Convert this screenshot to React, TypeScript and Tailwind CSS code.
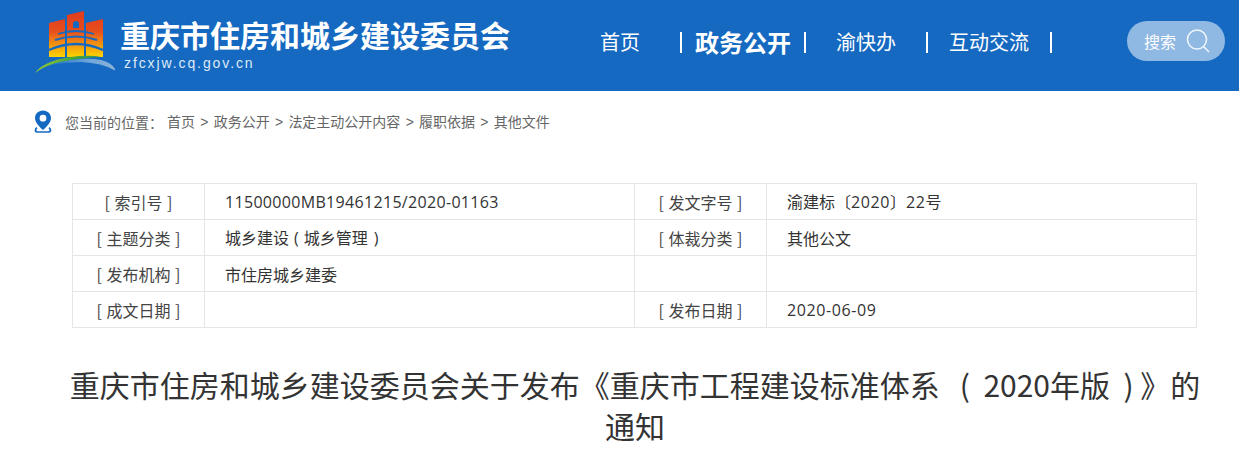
import React from "react";

const font = "font-['Noto_Sans_CJK_SC',sans-serif]";

const Num: React.FC<{ children: React.ReactNode; className?: string }> = ({ children, className = "tracking-[0.6px]" }) => (
  <span className={`font-['Open_Sans',sans-serif] ${className}`}>{children}</span>
);

const rows: [string, React.ReactNode, string, React.ReactNode][] = [
  [
    "[ 索引号 ]",
    <Num className="tracking-[0.32px]">11500000MB19461215/2020-01163</Num>,
    "[ 发文字号 ]",
    <>
      渝建标〔<Num>2020</Num>〕<Num>22</Num>号
    </>,
  ],
  [
    "[ 主题分类 ]",
    <>
      城乡建设<Num className="mx-[5px]">(</Num>城乡管理<Num className="mx-[6px]">)</Num>
    </>,
    "[ 体裁分类 ]",
    "其他公文",
  ],
  ["[ 发布机构 ]", "市住房城乡建委", "", ""],
  ["[ 成文日期 ]", "", "[ 发布日期 ]", <Num>2020-06-09</Num>],
];

const crumbs = ["首页", "政务公开", "法定主动公开内容", "履职依据", "其他文件"];

const Logo = () => (
  <svg width="84" height="68" viewBox="0 0 84 68" className="shrink-0">
    <defs>
      <linearGradient id="tower" gradientUnits="userSpaceOnUse" x1="0" y1="5" x2="0" y2="51">
        <stop offset="0" stopColor="#e03a1e" />
        <stop offset="0.45" stopColor="#e6501c" />
        <stop offset="0.75" stopColor="#f59a10" />
        <stop offset="1" stopColor="#fdd400" />
      </linearGradient>
      <linearGradient id="hill" x1="0" y1="0" x2="1" y2="0">
        <stop offset="0" stopColor="#97c83c" />
        <stop offset="0.6" stopColor="#46a53a" />
        <stop offset="1" stopColor="#2f8f6a" />
      </linearGradient>
      <linearGradient id="wave" x1="0" y1="0" x2="1" y2="0">
        <stop offset="0" stopColor="#1f76c8" />
        <stop offset="0.6" stopColor="#6ea6dc" />
        <stop offset="1" stopColor="#8fb2d6" />
      </linearGradient>
    </defs>
    <path d="M18 17 L34 13 V51 H18 Z" fill="url(#tower)" />
    <path d="M36 9 L53 5 V51 H36 Z" fill="url(#tower)" />
    <path d="M55 17 L72 13 V51 H55 Z" fill="url(#tower)" />
    <path d="M42 18 a3 3 0 0 1 6 0 v4 h-6 Z" fill="#1569c1" />
    <g fill="none" stroke="#1569c1">
      <path d="M27 28 Q45 22 63 28" strokeWidth="1.8" />
      <path d="M24 34 Q45 27 66 34" strokeWidth="2" />
      <path d="M18 44 Q45 32 72 44" strokeWidth="2.4" />
    </g>
    <path d="M4 67 Q14 53 48 50 Q62 49 70 51 Q38 53 22 58 Q12 61 4 67 Z" fill="url(#hill)" />
    <path d="M19 59 Q48 50 70 54 Q82 57 85 65 Q72 57 50 56 Q34 56 19 59 Z" fill="url(#wave)" />
  </svg>
);

const App: React.FC = () => {
  return (
    <div className={`${font} bg-white w-[1239px] h-[451px] overflow-hidden`}>
      <header className="h-[91px] bg-[#1569c1] flex text-white">
        <div className="w-[570px] pl-[31px] pt-[6px] flex items-start">
          <Logo />
          <div className="ml-[5px] pt-[10px]">
            <div className="text-[30px] leading-[36px] font-bold whitespace-nowrap">
              重庆市住房和城乡建设委员会
            </div>
            <div className="ml-[4px] mt-[1px] text-[14px] leading-[20px] tracking-[1.9px] font-['Liberation_Sans',sans-serif] text-[#dfeaf6]">
              zfcxjw.cq.gov.cn
            </div>
          </div>
        </div>
        <nav className="flex items-center h-[84px] text-[20px] whitespace-nowrap">
          <a className="w-[80px] ml-[30px] leading-[22px]">首页</a>
          <span className="w-[2px] h-[21px] bg-white" />
          <a className="ml-[13px] text-[24px] font-bold leading-[22px]">政务公开</a>
          <span className="ml-[13px] w-[2px] h-[21px] bg-white" />
          <a className="ml-[30px] leading-[22px]">渝快办</a>
          <span className="ml-[30px] w-[2px] h-[21px] bg-white" />
          <a className="ml-[21px] leading-[22px]">互动交流</a>
          <span className="ml-[21px] w-[2px] h-[21px] bg-white" />
        </nav>
        <div className="ml-[75px] mt-[21px] w-[98px] h-[40px] rounded-[20px] bg-[#8fb8e3] flex items-center pl-[17px]">
          <span className="text-[16px]">搜索</span>
          <svg width="26" height="26" viewBox="0 0 26 26" className="ml-[9px]" fill="none" stroke="#eef5fb" strokeWidth="1.6">
            <circle cx="12" cy="11.5" r="9.5" />
            <path d="M18.5 18.5 L24 24" />
          </svg>
        </div>
      </header>

      <div className="h-[62px] pl-[33px] flex items-center text-[14px] text-[#666] whitespace-nowrap">
        <svg width="20" height="24" viewBox="0 0 20 24" className="shrink-0">
          <path
            fillRule="evenodd"
            fill="#1569c1"
            d="M10 0.5 C5 0.5 2 4.2 2 8.2 C2 12.5 7 17.5 10 20 C13 17.5 18 12.5 18 8.2 C18 4.2 15 0.5 10 0.5 Z M10 4.8 a3.4 3.4 0 1 1 0 6.8 a3.4 3.4 0 1 1 0 -6.8 Z"
          />
          <path d="M3.5 17 C1 18.5 1 22.8 4 22.8 H16 C19 22.8 19 18.5 16.5 17 L15.5 18.3 C17 19.4 16.8 21.2 15.5 21.2 H4.5 C3.2 21.2 3 19.4 4.5 18.3 Z" fill="#1569c1" />
        </svg>
        <span className="ml-[12px]">您当前的位置：</span>
        <span className="ml-[4px] flex">
          {crumbs.map((c, i) => (
            <span key={c}>
              {i > 0 && <span className="mx-[5.25px] font-['Liberation_Sans',sans-serif]">&gt;</span>}
              {c}
            </span>
          ))}
        </span>
      </div>

      <div className="pt-[30px] pl-[72px]">
        <table className="w-[1125px] table-fixed border-collapse border border-[#e5e5e5] text-[16px] text-[#333]">
          <colgroup>
            <col className="w-[132px]" />
            <col className="w-[430px]" />
            <col className="w-[132px]" />
            <col />
          </colgroup>
          <tbody>
            {rows.map((r) => (
              <tr key={r[0]} className="h-[36px]">
                <td className="border border-[#e5e5e5] text-center leading-[20px] text-[#444] [word-spacing:1px]">{r[0]}</td>
                <td className="border border-[#e5e5e5] pl-[20px] leading-[20px]">{r[1]}</td>
                <td className="border border-[#e5e5e5] text-center leading-[20px] text-[#444] [word-spacing:1px]">{r[2]}</td>
                <td className="border border-[#e5e5e5] pl-[20px] leading-[20px]">{r[3]}</td>
              </tr>
            ))}
          </tbody>
        </table>
      </div>

      <h1 className="mt-[36px] ml-[65px] w-[1140px] text-center text-[30px] leading-[41px] text-[#333]">
        重庆市住房和城乡建设委员会关于发布《重庆市工程建设标准体系{"\u00a0\u00a0\u00a0(\u00a0\u00a02020年版\u00a0\u00a0)\u00a0"}》的通知
      </h1>
    </div>
  );
};

export default App;
